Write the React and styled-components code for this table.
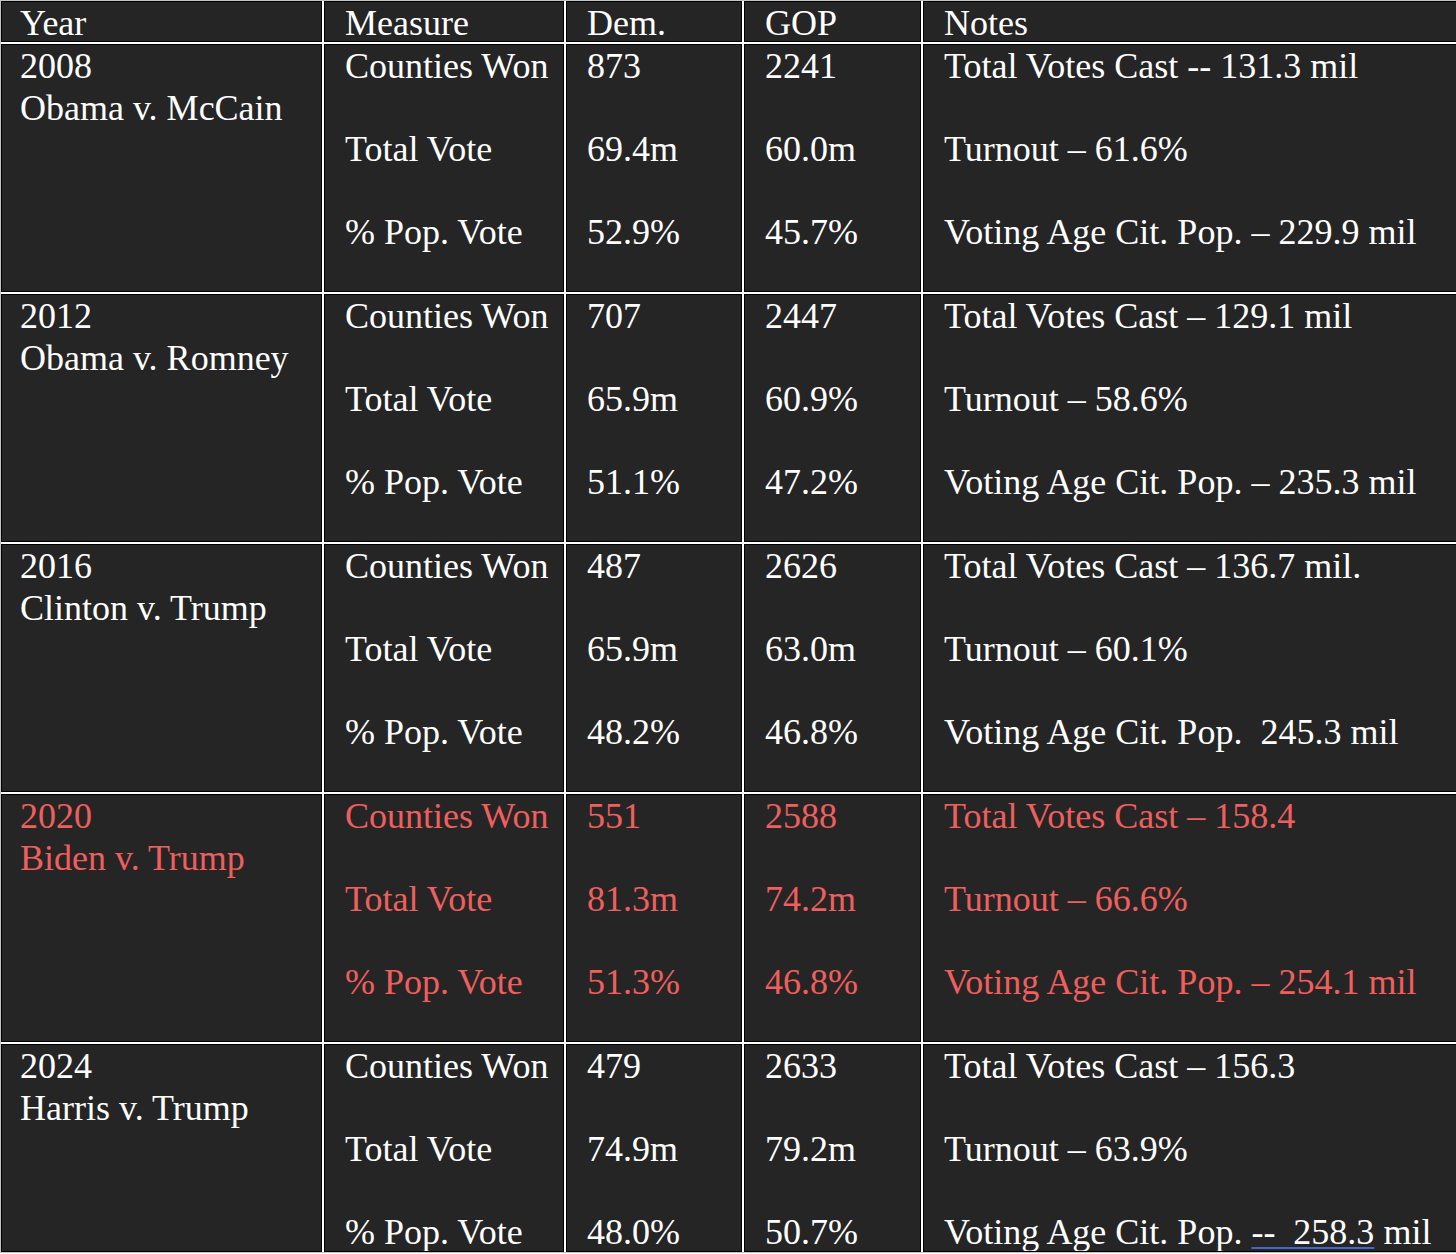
import React from "react";
import styled, { createGlobalStyle } from "styled-components";

const GlobalStyle = createGlobalStyle`
  html, body {
    margin: 0;
    padding: 0;
    overflow: hidden;
    background: #ffffff;
  }
`;

const Table = styled.div`
  display: grid;
  grid-template-columns: 321px 240px 176px 177px 533px;
  grid-template-rows: 41px repeat(4, 248px) 208px;
  gap: 2px;
  width: 1455px;
  background: #ffffff;
  border-top: 1px solid #c4c4c4;
  border-left: 1px solid #c4c4c4;
  border-bottom: 1px solid #c4c4c4;
  font-family: "Liberation Serif", "Times New Roman", serif;
  font-size: 36px;
  line-height: 41.5px;
`;

const Cell = styled.div`
  box-sizing: border-box;
  background: #252525;
  border: 1px solid #000;
  border-right: ${(p) => (p.last ? "none" : "1px solid #000")};
  padding: 1px 0 0 ${(p) => (p.first ? 18 : 20)}px;
  color: ${(p) => (p.highlight ? "#ef5f5e" : "#ffffff")};
  white-space: pre;
  overflow: hidden;
`;

const Line = styled.div`
  height: 41.5px;
`;

const Gap = styled.div`
  height: 41.5px;
`;

const Marked = styled.span`
  text-decoration: underline;
  text-decoration-color: #4467c8;
  text-decoration-thickness: 2px;
  text-underline-offset: 3px;
`;

const headers = ["Year", "Measure", "Dem.", "GOP", "Notes"];

const rows = [
  {
    year: "2008",
    race: "Obama v. McCain",
    dem: ["873", "69.4m", "52.9%"],
    gop: ["2241", "60.0m", "45.7%"],
    notes: [
      "Total Votes Cast -- 131.3 mil",
      "Turnout \u2013 61.6%",
      "Voting Age Cit. Pop. \u2013 229.9 mil",
    ],
  },
  {
    year: "2012",
    race: "Obama v. Romney",
    dem: ["707", "65.9m", "51.1%"],
    gop: ["2447", "60.9%", "47.2%"],
    notes: [
      "Total Votes Cast \u2013 129.1 mil",
      "Turnout \u2013 58.6%",
      "Voting Age Cit. Pop. \u2013 235.3 mil",
    ],
  },
  {
    year: "2016",
    race: "Clinton v. Trump",
    dem: ["487", "65.9m", "48.2%"],
    gop: ["2626", "63.0m", "46.8%"],
    notes: [
      "Total Votes Cast \u2013 136.7 mil.",
      "Turnout \u2013 60.1%",
      "Voting Age Cit. Pop.  245.3 mil",
    ],
  },
  {
    year: "2020",
    race: "Biden v. Trump",
    highlight: true,
    dem: ["551", "81.3m", "51.3%"],
    gop: ["2588", "74.2m", "46.8%"],
    notes: [
      "Total Votes Cast \u2013 158.4",
      "Turnout \u2013 66.6%",
      "Voting Age Cit. Pop. \u2013 254.1 mil",
    ],
  },
  {
    year: "2024",
    race: "Harris v. Trump",
    dem: ["479", "74.9m", "48.0%"],
    gop: ["2633", "79.2m", "50.7%"],
    notes: [
      "Total Votes Cast \u2013 156.3",
      "Turnout \u2013 63.9%",
      <>
        Voting Age Cit. Pop. <Marked>--  258.3</Marked> mil
      </>,
    ],
  },
];

const measures = ["Counties Won", "Total Vote", "% Pop. Vote"];

// three entries with an empty line between each
const Stack = ({ items }) => (
  <>
    {items.map((item, i) => (
      <React.Fragment key={i}>
        {i > 0 && <Gap />}
        <Line>{item}</Line>
      </React.Fragment>
    ))}
  </>
);

const App = () => {
  return (
    <>
      <GlobalStyle />
      <Table>
        {headers.map((h, i) => (
          <Cell key={h} first={i === 0} last={i === headers.length - 1}>
            {h}
          </Cell>
        ))}
        {rows.map((row) => (
          <React.Fragment key={row.year}>
            <Cell first highlight={row.highlight}>
              <Line>{row.year}</Line>
              <Line>{row.race}</Line>
            </Cell>
            <Cell highlight={row.highlight}>
              <Stack items={measures} />
            </Cell>
            <Cell highlight={row.highlight}>
              <Stack items={row.dem} />
            </Cell>
            <Cell highlight={row.highlight}>
              <Stack items={row.gop} />
            </Cell>
            <Cell last highlight={row.highlight}>
              <Stack items={row.notes} />
            </Cell>
          </React.Fragment>
        ))}
      </Table>
    </>
  );
};

export default App;
